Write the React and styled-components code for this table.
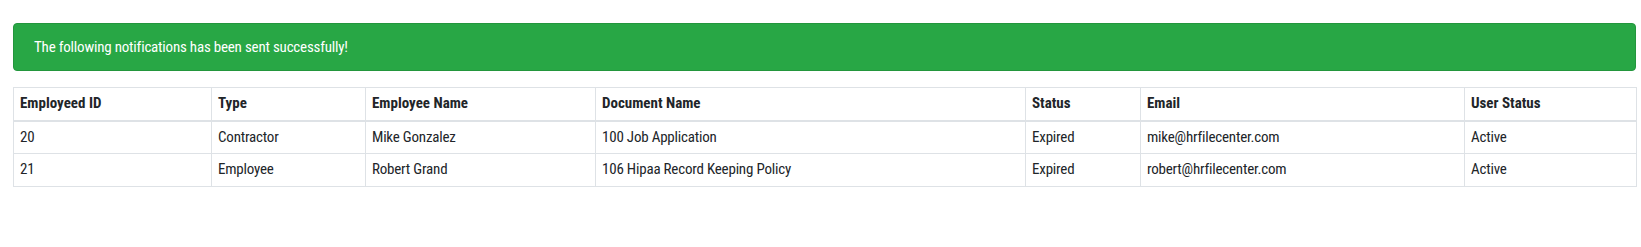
import React from 'react'
import styled, { createGlobalStyle } from 'styled-components'

const GlobalStyle = createGlobalStyle`
  body {
    margin: 0;
    background: #fff;
    font-family: "Roboto Condensed", Roboto, "Liberation Sans", sans-serif;
    font-stretch: condensed;
    color: #212529;
  }
`

const Page = styled.div`
  padding: 23px 5px 0 13px;
`

const Alert = styled.div`
  background: #28a745;
  border: 1px solid #23963d;
  border-radius: 4px;
  color: #fff;
  font-size: 15px;
  letter-spacing: -0.2px;
  line-height: 24px;
  padding: 11px 20px;
  margin-bottom: 16px;
`

const Table = styled.table`
  width: 100%;
  border-collapse: collapse;
  table-layout: fixed;
  font-size: 15px;
  line-height: 21.5px;
`

const Th = styled.th`
  text-align: left;
  font-weight: 700;
  padding: 5px 6px;
  border: 1px solid #dee2e6;
  border-bottom-width: 2px;
`

const Td = styled.td`
  padding: 5px 6px;
  letter-spacing: -0.2px;
  border: 1px solid #dee2e6;
`

const columns = [
  { label: 'Employeed ID', width: 198 },
  { label: 'Type', width: 154 },
  { label: 'Employee Name', width: 230 },
  { label: 'Document Name', width: 430 },
  { label: 'Status', width: 115 },
  { label: 'Email', width: 324 },
  { label: 'User Status', width: 172 },
]

const rows = [
  ['20', 'Contractor', 'Mike Gonzalez', '100 Job Application', 'Expired', 'mike@hrfilecenter.com', 'Active'],
  ['21', 'Employee', 'Robert Grand', '106 Hipaa Record Keeping Policy', 'Expired', 'robert@hrfilecenter.com', 'Active'],
]

export default function App() {
  return (
    <Page>
      <GlobalStyle />
      <Alert>The following notifications has been sent successfully!</Alert>
      <Table>
        <colgroup>
          {columns.map(c => <col key={c.label} style={{ width: c.width }} />)}
        </colgroup>
        <thead>
          <tr>
            {columns.map(c => <Th key={c.label}>{c.label}</Th>)}
          </tr>
        </thead>
        <tbody>
          {rows.map(r => (
            <tr key={r[0]}>
              {r.map((cell, i) => <Td key={i}>{cell}</Td>)}
            </tr>
          ))}
        </tbody>
      </Table>
    </Page>
  )
}
